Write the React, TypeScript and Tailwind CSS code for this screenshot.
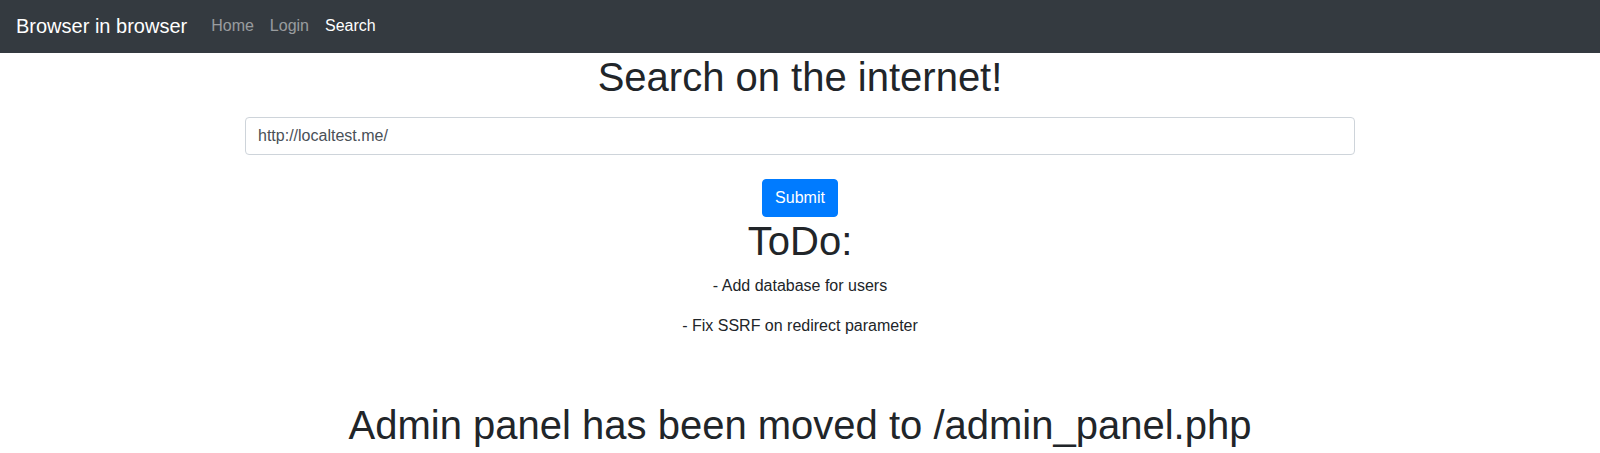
export default function App() {
  return (
    <div className="min-h-screen bg-white font-['Liberation_Sans',Arial,sans-serif] text-[#212529] text-base leading-6">
      {/* NAVBAR */}
      <nav className="h-[53px] bg-[#343a40] flex items-start pt-[11px] px-4">
        <a href="#" className="text-white text-[20px] leading-[30px] mr-4 whitespace-nowrap">
          Browser in browser
        </a>
        <ul className="flex items-center pt-[3px]">
          <li>
            <a href="#" className="block px-2 leading-6 text-white/50">Home</a>
          </li>
          <li>
            <a href="#" className="block px-2 leading-6 text-white/50">Login</a>
          </li>
          <li>
            <a href="#" className="block px-2 leading-6 text-white">Search</a>
          </li>
        </ul>
      </nav>

      {/* SEARCH */}
      <div className="max-w-[1140px] mx-auto px-[15px]">
        <h1 className="text-center text-[40px] leading-[48px] font-normal">Search on the internet!</h1>
        <form className="mt-4" onSubmit={(e) => e.preventDefault()}>
          <input
            type="text"
            defaultValue="http://localtest.me/"
            className="block w-full h-[38px] px-3 border border-[#ced4da] rounded-[4px] text-base text-[#495057] bg-white outline-none"
          />
          <div className="flex justify-center mt-6">
            <button
              type="submit"
              className="h-[38px] px-3 bg-[#007bff] border border-[#007bff] text-white rounded-[4px] leading-6"
            >
              Submit
            </button>
          </div>
        </form>

        {/* TODO */}
        <div className="text-center">
          <h1 className="text-[40px] leading-[48px] mb-[9px]">ToDo:</h1>
          <p className="mb-4">- Add database for users</p>
          <p>- Fix SSRF on redirect parameter</p>
          <h1 className="mt-[63px] text-[40px] leading-[48px]">Admin panel has been moved to /admin_panel.php</h1>
        </div>
      </div>
    </div>
  );
}
